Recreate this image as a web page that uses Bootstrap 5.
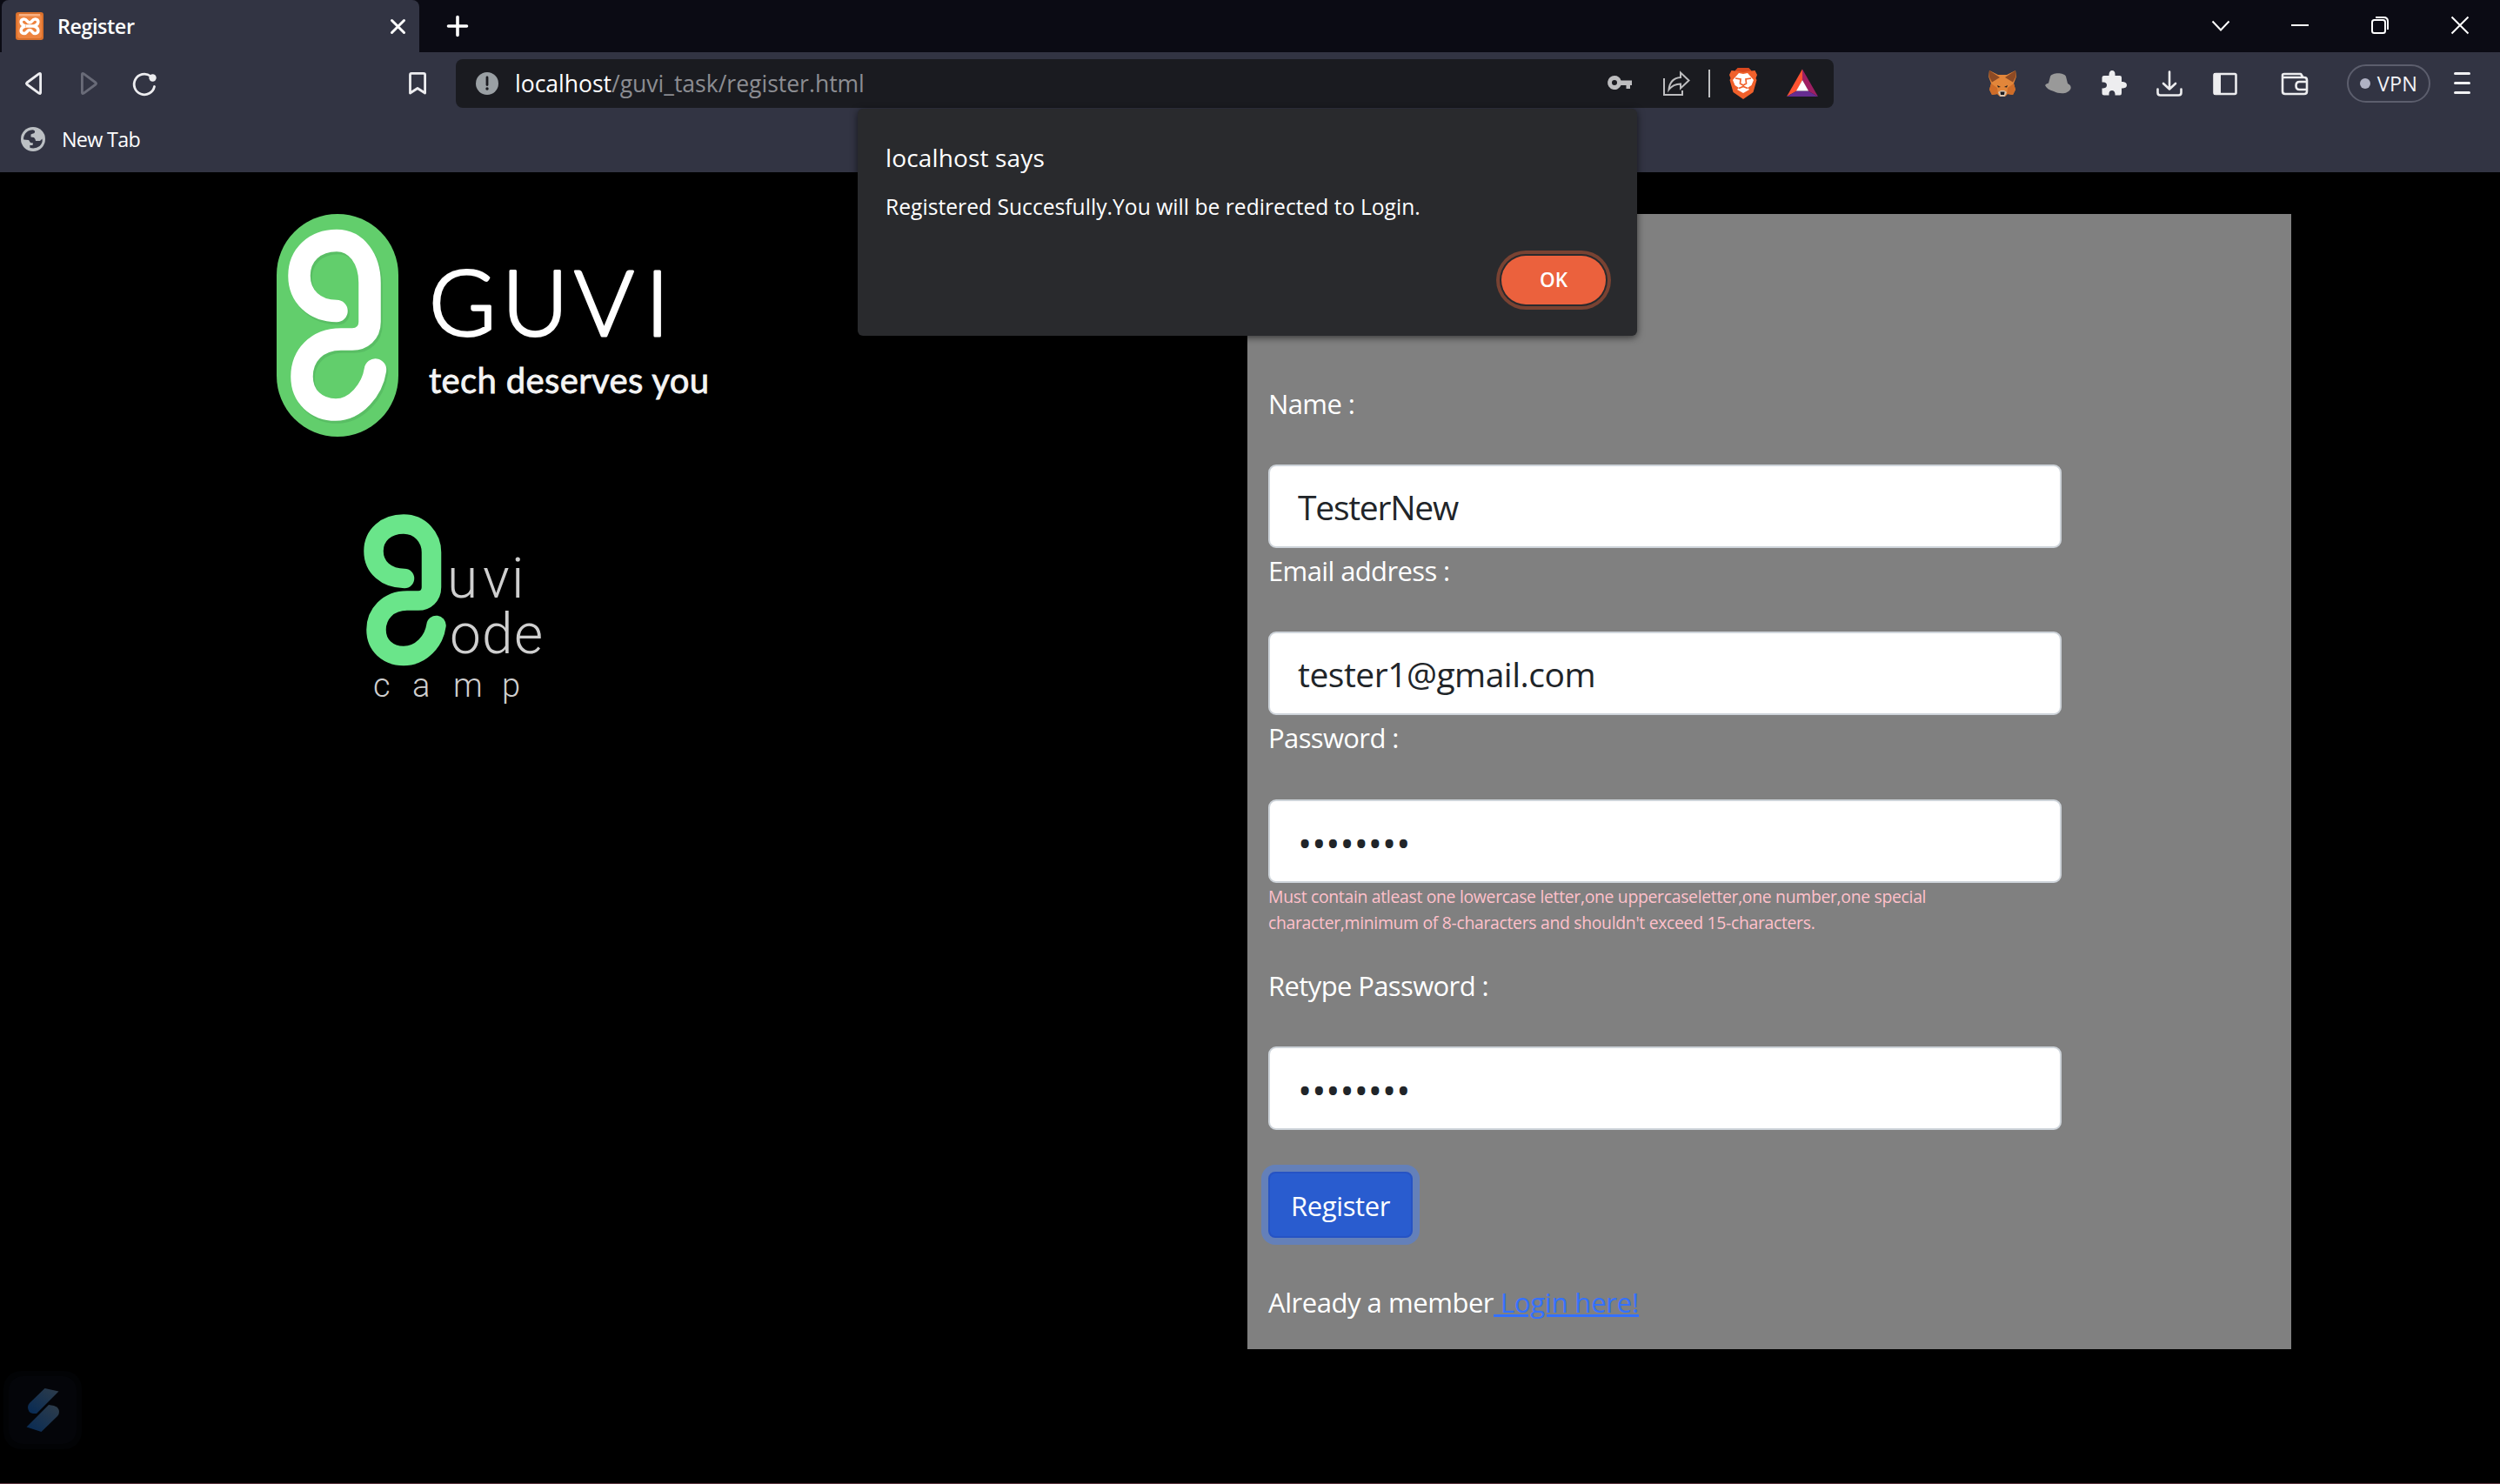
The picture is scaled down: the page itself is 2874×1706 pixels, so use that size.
<!DOCTYPE html>
<html lang="en">
<head>
<meta charset="utf-8">
<meta name="viewport" content="width=device-width, initial-scale=1">
<title>Register</title>
<link href="https://cdn.jsdelivr.net/npm/bootstrap@5.3.0/dist/css/bootstrap.min.css" rel="stylesheet">
<style>
html,body{height:100%}
body{margin:0;background:#000;color:#fff;font-family:"Open Sans","Noto Sans",sans-serif;font-size:31px;line-height:48px;overflow:hidden}
svg{display:block;flex:none;overflow:visible}
.browser-head{height:198px;background:#323443}
.tab-strip{height:60px;background:#0b0b14}
.page-tab{width:480px;height:60px;margin-left:2px;padding:0 16px;background:#323443;border-radius:8px 8px 0 0;font-size:23.3px;font-weight:600;letter-spacing:-.4px}
.new-tab{margin-left:32px}
.win-keys{gap:72px;padding-right:36px}
.tool-row{height:72px}
.addr{width:1584px;height:56px;border-radius:8px;background:#1a1b20;padding:0 18px 0 23px;font-size:26.5px;color:#8c8d92}
.addr b{font-weight:400;color:#fff}
.icon-text{margin-left:19px}
.vpn-pill{width:96px;height:44px;margin-left:44px;border:2px solid #5c5e6d;border-radius:22px;font-size:23.5px;letter-spacing:.2px;color:#f2f2f5}
.vpn-dot{width:12px;height:12px;background:#b0b2c4}
.menu-key{margin:0 34px 0 27px}
.marks-row{height:56px;padding-left:24px;font-size:23.3px;letter-spacing:-.68px}
.js-alert{left:986px;top:125px;width:896px;height:261px;border-radius:6px;background:#292a2d;padding:32px 32px;box-shadow:0 2px 8px rgba(0,0,0,.6);z-index:5}
.alert-title{font-size:28px;line-height:48px;letter-spacing:.15px}
.alert-text{font-size:24.6px;line-height:36px;margin-top:15px;letter-spacing:.03px}
.ok-btn{width:120px;height:56px;border:0;border-radius:28px;background:#eb613d;color:#fff;font-size:22.5px;font-weight:600;box-shadow:0 0 0 2px #292a2d,0 0 0 6px #794232;margin:38px 4px 0 0}
.ok-btn:hover{background:#eb613d;color:#fff}
.page-main{height:1508px;padding-top:48px;border-bottom:1px solid #5c3640}
.brand-col{width:1434px;padding-left:318px}
.camp-logo{margin:66px 0 0 92px}
.reg-panel{width:1200px;height:1305px;background:#808080;padding:192px 24px 0}
.reg-panel label{display:block;height:48px;margin-bottom:48px;padding-top:2px;letter-spacing:-.62px}
.reg-panel label[for=p]{margin-bottom:49px}
.reg-panel .form-control{width:912px;height:96px;border:2px solid #ced4da;border-radius:9px;padding:1px 32px 0;font-size:39px;letter-spacing:-.5px;color:#212529;background:#fff}
.reg-panel #n{letter-spacing:-1.25px}
.reg-panel .dots{font-size:43px;letter-spacing:0;padding-top:5px}
.hint-text{font-size:19.4px;line-height:30px;color:#ffc0cb;height:60px;margin-bottom:32px;padding-top:1px;letter-spacing:-.315px}
.reg-btn{display:block;width:166px;height:76px;padding:2px 0 0;margin:48px 0;font-size:31px;letter-spacing:-.39px;border:2px solid #2653c4;border-radius:8px;background:#295ccf;color:#fff;box-shadow:0 0 0 8px #6480b9}
.login-line{padding-top:2px;letter-spacing:-.46px}
.login-line a{color:#3471ff;text-decoration-thickness:3px;letter-spacing:-.19px}
.side-badge{left:4px;top:1576px}
</style>
</head>
<body>
<header class="browser-head">
  <div class="tab-strip d-flex align-items-center">
    <div class="page-tab d-flex align-items-center">
      <svg width="32" height="32" viewBox="0 0 32 32"><rect width="32" height="32" rx="3" fill="#d9702c"/><rect x="2" y="2" width="28" height="28" rx="3" fill="#ee8440"/><rect x="4" y="2" width="24" height="2.5" fill="#f7b083"/><path d="M12 16H20M11.500 16C4.500 14.500 5 8 9.500 8C13.500 8 12.500 12 16 12C19.500 12 18.500 8 22.500 8C27 8 27.500 14.500 20.500 16C27.500 17.500 27 24.500 22.500 24.500C18.500 24.500 19.500 20.500 16 20.500C12.500 20.500 13.500 24.500 9.500 24.500C5 24.500 4.500 17.500 11.500 16" fill="none" stroke="#fff" stroke-width="3.600" stroke-linejoin="round"/></svg>
      <span class="ms-3">Register</span>
      <svg class="ms-auto" width="17" height="17" viewBox="0 0 17 17"><path d="M1.500 1.500L15.500 15.500M15.500 1.500L1.500 15.500" stroke="#fff" stroke-width="3" stroke-linecap="round"/></svg>
    </div>
    <svg class="new-tab" width="24" height="24" viewBox="0 0 24 24"><path d="M12 1.500V22.500M1.500 12H22.500" stroke="#fff" stroke-width="3.600" stroke-linecap="round"/></svg>
    <div class="win-keys d-flex align-items-center ms-auto">
      <svg width="20" height="20" viewBox="0 0 20 20" fill="none" stroke="#fff" stroke-width="2"><path d="M1.500 4.500L11 14.500L20.500 4.500"/></svg>
      <svg width="20" height="20" viewBox="0 0 20 20"><rect y="8" width="20" height="2" fill="#fff"/></svg>
      <svg width="20" height="20" viewBox="0 0 20 20" fill="none" stroke="#fff" stroke-width="2"><rect x="1" y="3" width="15" height="15" rx="2.500"/><path d="M5 0H14.500Q19 0 19 4.500V14"/></svg>
      <svg width="20" height="20" viewBox="0 0 20 20"><path d="M.5 -.5L19.500 18.500M19.500 -.5L.5 18.500" stroke="#fff" stroke-width="2"/></svg>
    </div>
  </div>
  <div class="tool-row d-flex align-items-center">
    <svg width="524" height="72" viewBox="0 60 524 72" fill="none" stroke="#ededf0" stroke-width="2.800" stroke-linejoin="round" stroke-linecap="round">
      <path d="M46.600 85.500V106.500Q46.600 108 45 107.300L31 97Q29.800 96 31 95L45 84.700Q46.600 84 46.600 85.500Z"/>
      <path stroke="#696b78" d="M94.400 85.500V106.500Q94.400 108 96 107.300L110 97Q111.200 96 110 95L96 84.700Q94.400 84 94.400 85.500Z"/>
      <path d="M173 87.500A11.800 11.800 0 1 0 177.500 99.500"/><circle cx="175.500" cy="89.500" r="4.200" fill="#ededf0" stroke="none"/>
      <path d="M471.500 86Q471.500 84.400 473 84.400H487Q488.600 84.400 488.600 86V107L480 101.500L471.500 107Z"/>
    </svg>
    <div class="addr d-flex align-items-center">
      <svg width="26" height="26" viewBox="0 0 26 26"><circle cx="13" cy="13" r="13" fill="#9aa0a4"/><path d="M13 6V14.500" stroke="#1a1b20" stroke-width="2.800" stroke-linecap="round"/><circle cx="13" cy="19" r="1.700" fill="#1a1b20"/></svg>
      <span class="icon-text"><b>localhost</b>/guvi_task/register.html</span>
      <svg class="ms-auto" width="242" height="40" viewBox="1848 76 242 40">
        <path fill="#bdbdbf" fill-rule="evenodd" d="M1856 87A8 8 0 1 0 1863.500 98H1869.500V102H1874V98H1876V92.500H1863.500A8 8 0 0 0 1856 87ZM1856 92A3 3 0 1 1 1856 98A3 3 0 0 1 1856 92Z"/>
        <g fill="none" stroke="#bdbdbf" stroke-width="2"><path d="M1913 90V109H1934V104"/><path d="M1918.500 103C1919.500 94 1924 89.500 1932 89V83.500L1941.500 92.500L1932 101.500V96.500C1926 96.500 1922 98.500 1918.500 103Z"/></g>
        <path d="M1965 80V112" stroke="#bfc0c2" stroke-width="2"/>
        <path fill="#f0602b" d="M1998 78H2010L2013.500 81.500L2017.500 81L2020 86L2018.500 90L2019.500 92L2015.500 106L2004 114L1992.500 106L1988.500 92L1989.500 90L1988 86L1990.500 81L1994.500 81.500Z"/>
        <path fill="#d9481f" d="M1998 78H2010L2013.500 81.500L2004 83L1994.500 81.500Z"/>
        <path fill="#fff" d="M1999 84L2004 85L2009 84L2016 92L2013.500 98L2009 101L2011 103L2004 107L1997 103L1999 101L1994.500 98L1992 92Z"/>
        <path fill="none" stroke="#f0602b" stroke-width="1.700" d="M1995 90L2001 91L2000.500 96L2004 98L2007.500 96L2007 91L2013 90M2004 98V100M1999 101.500L2004 99.500L2009 101.500"/>
        <path fill="#ff5331" d="M2072 79.500V92L2065.500 104.500L2054 111Z"/><path fill="#9e1f63" d="M2072 79.500V92L2078.500 104.500L2090 111Z"/><path fill="#662d91" d="M2054 111L2065.500 104.500H2078.500L2090 111Z"/><path fill="#fff" d="M2072 92L2079 104.500H2065Z"/>
      </svg>
    </div>
    <svg class="ms-auto" width="368" height="40" viewBox="2286 76 368 40">
      <path fill="#e2863a" d="M2287 81L2297 86H2307L2317 81L2318 88L2315 96L2317 103L2314 109L2308 108L2305 111H2299L2296 108L2290 109L2287 103L2289 96L2286 88Z"/>
      <path fill="#8d4a24" d="M2287 81L2299 89L2290 94.500L2286.500 88ZM2317 81L2305 89L2314 94.500L2317.500 88Z"/><path fill="#cf6c28" d="M2287 103L2289 96L2296 101L2297 108L2290 109ZM2317 103L2315 96L2308 101L2307 108L2314 109Z"/>
      <path fill="#d9c3ae" d="M2297 106L2300 104H2304L2307 106L2304.500 111H2299.500Z"/><path fill="#17191e" d="M2299.500 105.500H2304.500L2304 109H2300ZM2296 98L2300 100L2297 100.500ZM2308 98L2304 100L2307 100.500Z"/>
      <path fill="#999" d="M2357 88C2359 83 2373 83 2375 88L2377 96Q2381.500 98 2380.500 102C2377 109 2367 108 2361 105Q2353 103 2351 98Q2352 96 2355 95.500Z"/>
      <path fill="#ededef" d="M2419 87H2424.500V85.500Q2425 81 2428 81Q2431.500 81 2431.500 85.500V87H2437Q2439 87 2439 89V94H2440.500Q2445 94.500 2445 98Q2445 101 2440.500 101.500H2439V107Q2439 109.500 2437 109.500H2431.500V108Q2431 104 2428 104Q2424.500 104 2424.500 108V109.500H2419Q2416.500 109.500 2416.500 107V101.500H2418Q2422 101 2422 98Q2422 94.500 2418 94.500H2416.500V89Q2416.500 87 2419 87Z"/>
      <g fill="none" stroke="#ededef" stroke-width="2.600" stroke-linecap="round" stroke-linejoin="round"><path d="M2494 82.500V102M2487 96L2494 102.500L2501 96M2480.500 102.500V106.500Q2480.500 109.500 2483.500 109.500H2504.500Q2507.500 109.500 2507.500 106.500V102.500"/><rect x="2545.500" y="85" width="25" height="23" rx="1.500"/><path d="M2624 86.500Q2624 85 2626 85H2645L2647.500 89M2624 87V105Q2624 108 2627 108H2649Q2652 108 2652 105V92Q2652 89 2649 89H2626M2652 94H2643.500Q2639.500 94 2639.500 98.500T2643.500 103H2652"/></g>
      <rect x="2545" y="84" width="8" height="25" fill="#ededef"/>
    </svg>
    <div class="vpn-pill d-flex align-items-center justify-content-center"><span class="vpn-dot rounded-circle me-2"></span><span>VPN</span></div>
    <svg class="menu-key" width="19" height="26" viewBox="0 0 19 26"><path d="M1.500 1.500H17.500M1.500 12.500H17.500M1.500 23.500H17.500" stroke="#f1f1f3" stroke-width="3" stroke-linecap="round"/></svg>
  </div>
  <div class="marks-row d-flex align-items-center">
    <svg width="28" height="28" viewBox="0 0 28 28"><circle cx="14" cy="14" r="14" fill="#bcc0c4"/><path fill="#323443" d="M3 13C4 7 8 3.500 14 3.300L16 4.500Q16.500 7 14 7.500L11.500 8.500V11.500L15 12Q17 14 17 16H22L24.500 13.500Q25.500 18 21.500 22Q17 25.500 10.500 24L10.300 21H13.500L14 18.500L11 18L9 15L3.300 14.500Z"/></svg>
    <span class="icon-text">New Tab</span>
  </div>
</header>

<div class="js-alert position-absolute" role="alertdialog">
  <div class="alert-title">localhost says</div>
  <div class="alert-text">Registered Succesfully.You will be redirected to Login.</div>
  <div class="d-flex justify-content-end"><button class="btn ok-btn p-0" type="button">OK</button></div>
</div>

<main class="page-main d-flex align-items-start">
  <div class="brand-col">
    <svg width="510" height="270" viewBox="318 246 510 270">
      <rect x="318" y="246" width="140" height="256" rx="70" fill="#62ce6c"/>
      <g fill="none" stroke-width="25.500" stroke-linecap="round">
        <path stroke="#4fae5b" opacity=".5" transform="translate(2 3)" d="M387 357.500C362 357.500 344 341 344 317C344 293 362 276.500 387 276.500C410 276.500 425 298 425 325V370C425 383 416 390 405 390H392C364 390 347 409 347 433C347 456 364 471 386 471C409 471 428 448 431.500 425"/>
        <path stroke="#fff" d="M387 357.500C362 357.500 344 341 344 317C344 293 362 276.500 387 276.500C410 276.500 425 298 425 325V370C425 383 416 390 405 390H392C364 390 347 409 347 433C347 456 364 471 386 471C409 471 428 448 431.500 425"/>
      </g>
      <text x="493 577 660 742" y="386" font-family="Lato, sans-serif" font-weight="300" font-size="105" fill="#fff" stroke="#fff" stroke-width="3" stroke-linejoin="round">GUVI</text>
      <text x="493" y="452" textLength="322" font-family="Lato, sans-serif" font-size="40" fill="#f4f4f4" stroke="#f4f4f4" stroke-width=".8">tech deserves you</text>
    </svg>
    <svg class="camp-logo" width="230" height="240" viewBox="410 582 230 240">
      <path fill="none" stroke="#6ae58a" stroke-width="22.500" stroke-linecap="round" d="M465 665C444 665 429.500 652 429.500 633.500C429.500 615 444 602.500 464 602.500C483 602.500 496 618 496 635V675C496 685 489 690.500 481 690.500H468C446 690.500 432.500 706 432.500 724C432.500 742 446 754 464 754C484 754 499 737 501.500 719"/>
      <g font-family="Roboto, sans-serif" font-weight="300" fill="#cfcfcf">
        <text x="514 555 588" y="687" font-size="64">uvi</text>
        <text x="517 554 591" y="751" font-size="64">ode</text>
        <text x="429 474 521 577" y="801" font-size="38">camp</text>
      </g>
    </svg>
  </div>
  <form class="reg-panel">
    <label for="n">Name :</label>
    <input id="n" class="form-control" type="text" value="TesterNew">
    <label for="e">Email address :</label>
    <input id="e" class="form-control" type="text" value="tester1@gmail.com">
    <label for="p">Password :</label>
    <input id="p" class="form-control dots" type="password" value="Tester1@">
    <div class="hint-text">Must contain atleast one lowercase letter,one uppercaseletter,one number,one special<br>character,minimum of 8-characters and shouldn't exceed 15-characters.</div>
    <label for="r">Retype Password :</label>
    <input id="r" class="form-control dots" type="password" value="Tester1@">
    <button class="btn reg-btn" type="button">Register</button>
    <div class="login-line">Already a member<a href="#"> Login here!</a></div>
  </form>
</main>

<svg class="side-badge position-absolute" width="90" height="90" viewBox="4 1576 90 90">
  <defs><linearGradient id="ga" x1="1" y1="0" x2="0" y2="1"><stop offset="0" stop-color="#2f3d4a"/><stop offset="1" stop-color="#062a55"/></linearGradient></defs>
  <rect x="4" y="1576" width="90" height="90" rx="20" fill="#020305"/><rect x="10" y="1582" width="78" height="78" rx="16" fill="#040509"/>
  <path fill="url(#ga)" d="M51.500 1596L67.500 1599.500L42 1625H38Q32 1624 32 1617.500Q32 1615 34 1613Z"/>
  <path fill="url(#ga)" d="M56 1615L62 1616Q68 1618 68 1623Q68 1626 66 1628L47.500 1646L30.500 1640.500Z"/>
</svg>
<script src="https://cdn.jsdelivr.net/npm/bootstrap@5.3.0/dist/js/bootstrap.bundle.min.js"></script>
</body>
</html>
